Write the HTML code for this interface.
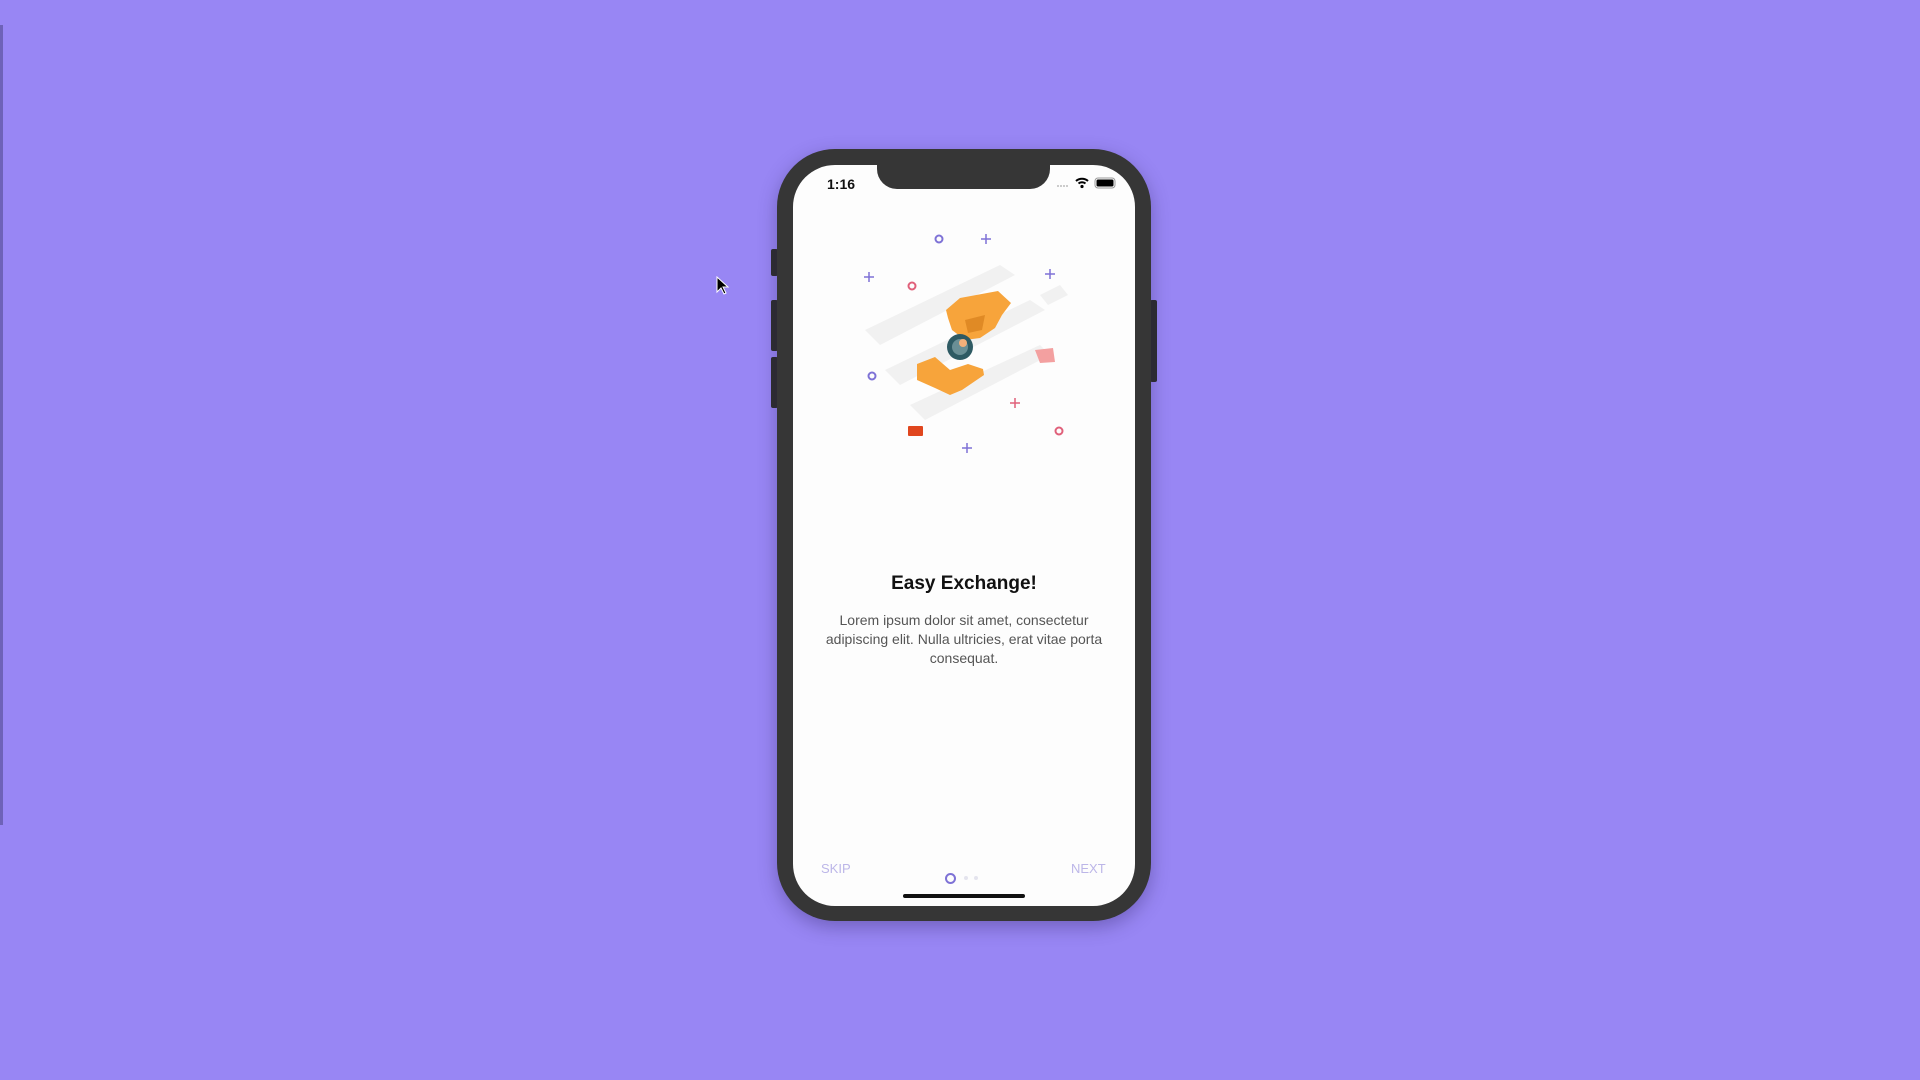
<!DOCTYPE html>
<html><head><meta charset="utf-8"><style>
html,body{margin:0;padding:0;}
body{width:1920px;height:1080px;background:#9886f4;position:relative;overflow:hidden;font-family:"Liberation Sans",sans-serif;}
.abs{position:absolute;}
.frame{left:777px;top:149px;width:374px;height:772px;background:#363636;border-radius:58px;box-shadow:0 6px 18px rgba(40,30,90,.35);}
.screen{left:793px;top:165px;width:342px;height:741px;background:#fdfdfd;border-radius:42px;overflow:hidden;}
.notch{left:877px;top:160px;width:173px;height:29px;background:#363636;border-radius:0 0 20px 20px;}
.btn{background:#2e2e2e;border-radius:2px;}
.t{text-align:center;width:342px;left:793px;}
</style></head><body>
<div class="abs" style="left:0;top:25px;width:3px;height:800px;background:#6e62b8"></div>
<div class="abs btn" style="left:771px;top:249px;width:7px;height:27px"></div>
<div class="abs btn" style="left:771px;top:300px;width:7px;height:51px"></div>
<div class="abs btn" style="left:771px;top:357px;width:7px;height:51px"></div>
<div class="abs btn" style="left:1150px;top:300px;width:7px;height:82px"></div>
<div class="abs frame"></div>
<div class="abs screen"></div>
<div class="abs notch"></div>
<div class="abs" style="left:827px;top:176px;font-weight:bold;font-size:14px;color:#111">1:16</div>
<svg class="abs" style="left:1055px;top:175px" width="65" height="16" viewBox="0 0 65 16">
<g fill="#ccc"><rect x="2" y="10" width="2" height="2"/><rect x="5" y="10" width="2" height="2"/><rect x="8" y="10" width="2" height="2"/><rect x="11" y="10" width="2" height="2"/></g>
<path d="M21 6a9 9 0 0 1 12 0M23.5 8.5a5.5 5.5 0 0 1 7 0" stroke="#000" stroke-width="2" fill="none"/><circle cx="27" cy="11.5" r="1.6" fill="#000"/>
<rect x="40" y="3" width="20" height="10" rx="3" fill="none" stroke="#999" stroke-width="1"/><rect x="41.5" y="4.5" width="17" height="7" rx="1.5" fill="#000"/>
</svg>
<svg class="abs" style="left:793px;top:165px" width="342" height="320" viewBox="793 165 342 320">
<g fill="#f1f1f1">
<path d="M865 330 L1000 265 L1015 275 L880 345Z"/>
<path d="M885 370 L1030 300 L1045 310 L900 385Z"/>
<path d="M910 405 L1040 345 L1050 355 L925 420Z"/>
<path d="M1040 295 L1060 285 L1068 295 L1048 305Z"/>
</g>
<path d="M946 310 L960 298 L998 291 L1011 303 L1002 315 L995 328 L980 338 L965 340 L952 330 L948 318Z" fill="#f7a43b"/>
<path d="M965 320 L985 315 L982 330 L968 333Z" fill="#e08a25"/>
<circle cx="960" cy="347" r="13" fill="#2e5a63"/><circle cx="960" cy="347" r="8" fill="#6a8f95"/>
<circle cx="963" cy="343" r="4" fill="#f4b07a"/>
<path d="M917 364 L935 357 L950 370 L968 364 L983 369 L984 375 L962 390 L950 395 L935 388 L917 380Z" fill="#f7a43b"/>
<path d="M1035 350 L1053 348 L1055 362 L1040 363Z" fill="#f3a0a0"/>
<rect x="908" y="426" width="15" height="10" rx="1" fill="#e0461e"/>
<g fill="none" stroke-width="2"><circle cx="939" cy="239" r="3.5" stroke="#7e72d6"/><circle cx="912" cy="286" r="3.5" stroke="#e0607a"/><circle cx="872" cy="376" r="3.5" stroke="#7e72d6"/><circle cx="1059" cy="431" r="3.5" stroke="#e0607a"/></g>
<g stroke-width="1.5"><path d="M986 234v10M981 239h10" stroke="#7e72d6"/><path d="M869 272v10M864 277h10" stroke="#7e72d6"/><path d="M1050 269v10M1045 274h10" stroke="#7e72d6"/><path d="M1015 398v10M1010 403h10" stroke="#e0607a"/><path d="M967 443v10M962 448h10" stroke="#7e72d6"/></g>
</svg>
<div class="abs t" style="top:573px;font-size:19px;font-weight:bold;color:#111">Easy Exchange!</div>
<div class="abs t" style="top:611px;font-size:14px;line-height:19px;color:#555;"><div style="width:290px;margin:0 auto">Lorem ipsum dolor sit amet, consectetur adipiscing elit. Nulla ultricies, erat vitae porta consequat.</div></div>
<div class="abs" style="left:821px;top:861px;font-size:13px;color:#bcb6e8">SKIP</div>
<div class="abs" style="left:1071px;top:861px;font-size:13px;color:#bcb6e8">NEXT</div>
<div class="abs" style="left:945px;top:873px;width:7px;height:7px;border:2px solid #7e72d6;border-radius:50%"></div>
<div class="abs" style="left:964px;top:876px;width:4px;height:4px;background:#e4e4ee;border-radius:50%"></div>
<div class="abs" style="left:974px;top:876px;width:4px;height:4px;background:#e4e4ee;border-radius:50%"></div>
<div class="abs" style="left:903px;top:894px;width:122px;height:4px;background:#111;border-radius:2px"></div>
<svg class="abs" style="left:716px;top:276px" width="14" height="20" viewBox="0 0 14 20"><path d="M1 1v15l4-4 3 6 2-1-3-6h5Z" fill="#000" stroke="#fff" stroke-width="1"/></svg>
</body></html>
